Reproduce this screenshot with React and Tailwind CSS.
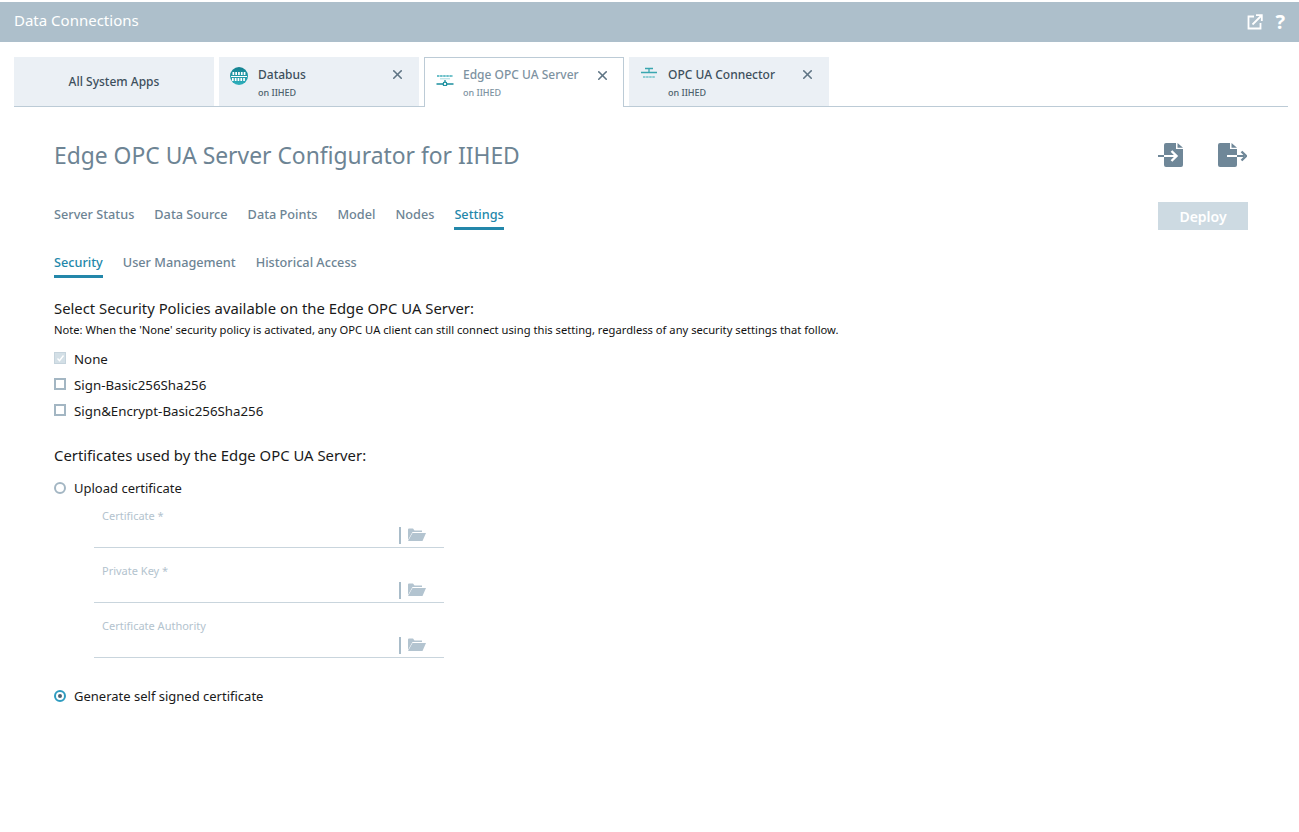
import React from 'react';
import { X } from 'lucide-react';

const IconBus = () => (
  <svg width="18" height="18" viewBox="0 0 18 18">
    <defs>
      <linearGradient id="busFill" x1="0" y1="0" x2="0" y2="1">
        <stop offset="0" stopColor="#12808f" />
        <stop offset="1" stopColor="#2fb0bd" />
      </linearGradient>
    </defs>
    <circle cx="9" cy="9" r="9" fill="url(#busFill)" />
    <path d="M1 9.500h16" stroke="#fff" strokeWidth="1" />
    <path d="M2.500 6.500h13M2 12.500h14" stroke="#fff" strokeWidth="3" strokeDasharray="1.700 1.100" />
  </svg>
);

const IconServer = () => (
  <svg width="18" height="18" viewBox="0 0 18 18">
    <path d="M1 8h16" stroke="#6cc0c9" strokeWidth="2" strokeDasharray="2.500 0.600" />
    <path d="M4 10.800h10" stroke="#a5dbe0" strokeWidth="1" />
    <path d="M0.500 16h6.500M11 16h6.500" stroke="#1b8f9e" strokeWidth="1.300" />
    <circle cx="9" cy="16" r="1.800" fill="#fff" stroke="#1b8f9e" strokeWidth="1.300" />
    <path d="M9 12v2.200" stroke="#1b8f9e" strokeWidth="1.300" />
  </svg>
);

const IconConnector = () => (
  <svg width="18" height="18" viewBox="0 0 18 18">
    <path d="M5 1.500h8M1 5.500h16M9 1.500v4" stroke="#3aa6b0" strokeWidth="1.300" />
    <path d="M3 10h12" stroke="#8ccdd3" strokeWidth="2.200" strokeDasharray="2.500 0.600" />
  </svg>
);

const IconImport = () => (
  <svg width="25" height="26" viewBox="0 0 25 26">
    <path d="M8 1h10v6h7v16a2 2 0 0 1-2 2H8a2 2 0 0 1-2-2V3a2 2 0 0 1 2-2z" fill="#6f8798" />
    <path d="M19.500 1l5.500 4.700h-5.500z" fill="#6f8798" />
    <path d="M0 14h6" stroke="#6f8798" strokeWidth="2" />
    <path d="M6 14h12" stroke="#fff" strokeWidth="2" />
    <path d="M13.500 9l5 5-5 5" fill="none" stroke="#fff" strokeWidth="2.400" />
  </svg>
);

const IconExport = () => (
  <svg width="29" height="26" viewBox="0 0 29 26">
    <path d="M2 1h10v6h7v16a2 2 0 0 1-2 2H2a2 2 0 0 1-2-2V3a2 2 0 0 1 2-2z" fill="#6f8798" />
    <path d="M13.500 1l5.500 4.700h-5.500z" fill="#6f8798" />
    <path d="M9 14h10" stroke="#fff" strokeWidth="2" />
    <path d="M19 14h7" stroke="#6f8798" strokeWidth="2" />
    <path d="M23.500 9.500l4.500 4.500-4.500 4.500" fill="none" stroke="#6f8798" strokeWidth="2.400" />
  </svg>
);

const IconOpen = () => (
  <svg width="16" height="16" viewBox="0 0 16 16" fill="none" stroke="#fff" strokeWidth="1.800">
    <path d="M7 2.500H1.500v12h12V9" />
    <path d="M5.500 10.500L14 2" />
    <path d="M9 1.200h5.800V7" />
  </svg>
);

const IconFolder = () => (
  <svg width="18" height="13" viewBox="0 0 18 13">
    <path d="M0 12V1.500A1 1 0 0 1 1 .5h4l1.500 2H14v1.500H4.500z" fill="#b3c4d0" />
    <path d="M4.500 5H18l-3.500 8H0z" fill="#b3c4d0" />
  </svg>
);

const AppTab = ({ icon, title, active }) => (
  <div className={active
    ? 'w-[200px] h-[50px] -mb-px bg-white border border-[#bccbd6] border-b-0 relative flex'
    : 'w-[200px] h-[49px] bg-[#ebf0f5] relative flex'}>
    <div className={active ? 'w-[38px] pl-[11px] pt-[10px]' : 'w-[39px] pl-[11px] pt-[10px]'}>{icon}</div>
    <div className={active ? 'flex-1 pt-[8px]' : 'flex-1 pt-[9px]'}>
      <div className={active ? 'text-[12px] leading-[18px] font-medium text-[#7d92a1]' : 'text-[12px] leading-[18px] font-medium text-[#3d4f5c]'}>{title}</div>
      <div className={active ? 'text-[9px] leading-[14px] mt-[2px] font-medium text-[#7d92a1]' : 'text-[9px] leading-[14px] mt-[2px] font-medium text-[#4c5f6c]'}>on IIHED</div>
    </div>
    <X size={15} strokeWidth={2.500} className={active ? 'mt-[10px] mr-[13px] text-[#5f7484]' : 'mt-[10px] mr-[14px] text-[#5f7484]'} />
  </div>
);

const NavItem = ({ label, active }) => (
  <div className={active ? 'border-b-[3px] border-[#2387aa] text-[#2387aa] pt-[2px] pb-[3px]' : 'border-b-[3px] border-transparent text-[#6d8494] pt-[2px] pb-[3px]'}>
    {label}
  </div>
);

const CheckRow = ({ label, checked }) => (
  <div className="h-[26px] flex items-center gap-[8px]">
    <div className={checked
      ? 'w-[12px] h-[12px] -mt-[4px] bg-[#d3dfe6] border border-[#c5d3dc] flex items-center justify-center'
      : 'w-[12px] h-[12px] -mt-[4px] border-2 border-[#a3b6c3]'}>
      {checked && (
        <svg width="9" height="9" viewBox="0 0 9 9" fill="none" stroke="#fff" strokeWidth="1.400"><path d="M1.500 4.500l2 2.200L7.500 1.500" /></svg>
      )}
    </div>
    <span className="text-[13.300px] text-[#1a1a1a]">{label}</span>
  </div>
);

const FileField = ({ label }) => (
  <div className="w-[350px] h-[55px] border-b border-[#c9d5dd] relative">
    <div className="absolute left-[8px] top-[15px] text-[11px] leading-[16px] text-[#b3c3ce]">{label}</div>
    <div className="absolute left-[305px] top-[34px] w-[2px] h-[17px] bg-[#a9bcc9]" />
    <div className="absolute left-[314px] top-[35px]"><IconFolder /></div>
  </div>
);

export default function App() {
  return (
    <div className="w-[1299px] h-[832px] bg-white overflow-hidden pt-[2px] font-['Noto_Sans',sans-serif]">
      <div className="h-[40px] bg-[#adbfcb] flex items-center justify-between pl-[14px] pr-[14px]">
        <span className="text-[15px] text-white -mt-[4px]">Data Connections</span>
        <div className="flex items-center gap-[12px]">
          <IconOpen />
          <span className="text-[20px] leading-none font-bold text-white">?</span>
        </div>
      </div>

      <div className="mt-[15px] mx-[11px] ml-[14px] border-b border-[#bccbd6] flex gap-[5px] h-[50px]">
        <div className="w-[200px] h-[49px] pt-[1px] bg-[#ebf0f5] flex items-center justify-center text-[12px] font-medium text-[#3d4f5c]">All System Apps</div>
        <AppTab icon={<IconBus />} title="Databus" />
        <AppTab icon={<IconServer />} title="Edge OPC UA Server" active />
        <AppTab icon={<IconConnector />} title="OPC UA Connector" />
      </div>

      <div className="pl-[54px] pr-[52px]">
        <div className="flex items-center justify-between h-[68px] mt-[15px] -mb-[2px] pb-[3px]">
          <h1 className="text-[22.850px] leading-none mt-[4px] text-[#6d8494]">Edge OPC UA Server Configurator for IIHED</h1>
          <div className="flex items-center gap-[35px]">
            <IconImport />
            <IconExport />
          </div>
        </div>

        <div className="flex items-start justify-between mt-[14px]">
          <div className="flex gap-[20px] text-[12.700px] leading-[20px] font-medium">
            <NavItem label="Server Status" />
            <NavItem label="Data Source" />
            <NavItem label="Data Points" />
            <NavItem label="Model" />
            <NavItem label="Nodes" />
            <NavItem label="Settings" active />
          </div>
          <div className="w-[90px] h-[28px] -mr-[1px] bg-[#cddae2] text-white text-[14px] font-semibold flex items-center justify-center">Deploy</div>
        </div>

        <div className="flex gap-[20px] text-[12.700px] leading-[20px] font-medium mt-[20px]">
          <NavItem label="Security" active />
          <NavItem label="User Management" />
          <NavItem label="Historical Access" />
        </div>

        <div className="text-[14.850px] leading-[20px] text-[#1a1a1a] mt-[20px]">Select Security Policies available on the Edge OPC UA Server:</div>
        <div className="text-[11.200px] leading-[14px] text-[#111] mt-[5px]">Note: When the 'None' security policy is activated, any OPC UA client can still connect using this setting, regardless of any security settings that follow.</div>

        <div className="mt-[10px]">
          <CheckRow label="None" checked />
          <CheckRow label="Sign-Basic256Sha256" />
          <CheckRow label="Sign&Encrypt-Basic256Sha256" />
        </div>

        <div className="text-[14.850px] leading-[20px] text-[#1a1a1a] mt-[20px]">Certificates used by the Edge OPC UA Server:</div>

        <div className="h-[20px] flex items-center gap-[8px] mt-[14px]">
          <div className="w-[12px] h-[12px] -mt-[2px] rounded-full border-2 border-[#a3b6c3]" />
          <span className="text-[13px] text-[#1a1a1a]">Upload certificate</span>
        </div>

        <div className="ml-[40px] -mt-[6px]">
          <FileField label="Certificate *" />
          <FileField label="Private Key *" />
          <FileField label="Certificate Authority" />
        </div>

        <div className="h-[20px] flex items-center gap-[8px] mt-[29px]">
          <div className="w-[12px] h-[12px] -mt-[2px] rounded-full border-[2px] border-[#2f9cc0] flex items-center justify-center">
            <div className="w-[4px] h-[4px] rounded-full bg-[#4d6272]" />
          </div>
          <span className="text-[13px] text-[#1a1a1a]">Generate self signed certificate</span>
        </div>
      </div>
    </div>
  );
}
